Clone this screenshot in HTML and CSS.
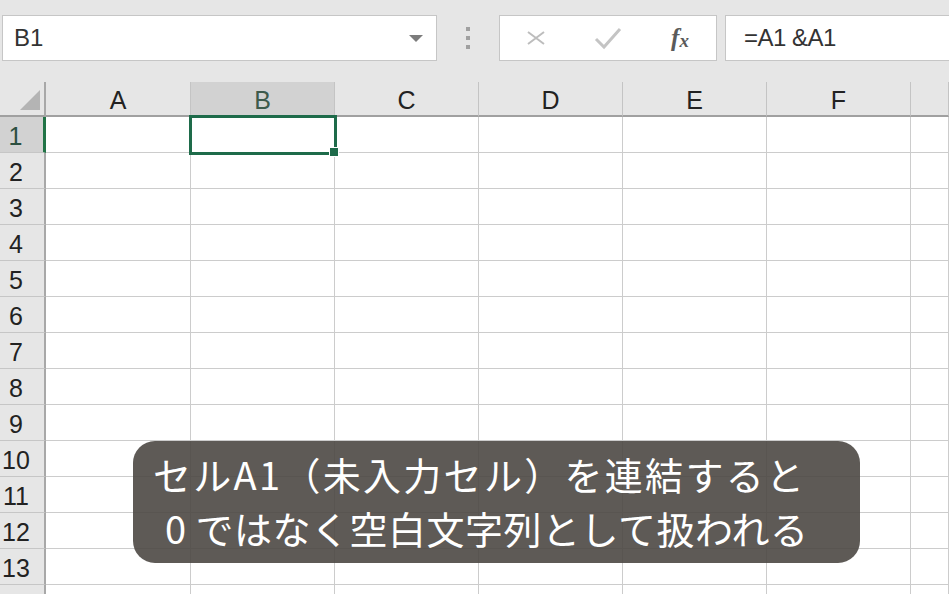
FILE: index.html
```html
<!DOCTYPE html>
<html lang="ja">
<head>
<meta charset="utf-8">
<link rel="stylesheet" href="styles.css">
</head>
<body>
<div class="app">
  <div class="toolbar">
    <div class="namebox"><span>B1</span><span class="arrow"></span></div>
    <div class="sep"><i></i><i></i><i></i></div>
    <div class="fxbtns">
      <span class="btn">
        <svg width="20" height="14" viewBox="0 0 20 14"><path d="M2 1 L18 13 M18 1 L2 13" stroke="#bdbdbd" stroke-width="2" fill="none"/></svg>
      </span>
      <span class="btn">
        <svg width="28" height="24" viewBox="0 0 28 24"><path d="M2 13 L10 21 L26 3" stroke="#c4c4c4" stroke-width="3" fill="none"/></svg>
      </span>
      <span class="btn fx"><i>f</i><i class="x">x</i></span>
    </div>
    <div class="formula">=A1 &amp;A1</div>
  </div>
  <div class="sheet">
    <div class="grid">
      <div class="corner"><span class="tri"></span></div>
      <div class="ch">A</div><div class="ch sel">B</div><div class="ch">C</div><div class="ch">D</div><div class="ch">E</div><div class="ch">F</div><div class="ch last"></div>

      <div class="rh sel">1</div><div class="c"></div><div class="c"></div><div class="c"></div><div class="c"></div><div class="c"></div><div class="c"></div><div class="c"></div>
      <div class="rh">2</div><div class="c"></div><div class="c"></div><div class="c"></div><div class="c"></div><div class="c"></div><div class="c"></div><div class="c"></div>
      <div class="rh">3</div><div class="c"></div><div class="c"></div><div class="c"></div><div class="c"></div><div class="c"></div><div class="c"></div><div class="c"></div>
      <div class="rh">4</div><div class="c"></div><div class="c"></div><div class="c"></div><div class="c"></div><div class="c"></div><div class="c"></div><div class="c"></div>
      <div class="rh">5</div><div class="c"></div><div class="c"></div><div class="c"></div><div class="c"></div><div class="c"></div><div class="c"></div><div class="c"></div>
      <div class="rh">6</div><div class="c"></div><div class="c"></div><div class="c"></div><div class="c"></div><div class="c"></div><div class="c"></div><div class="c"></div>
      <div class="rh">7</div><div class="c"></div><div class="c"></div><div class="c"></div><div class="c"></div><div class="c"></div><div class="c"></div><div class="c"></div>
      <div class="rh">8</div><div class="c"></div><div class="c"></div><div class="c"></div><div class="c"></div><div class="c"></div><div class="c"></div><div class="c"></div>
      <div class="rh">9</div><div class="c"></div><div class="c"></div><div class="c"></div><div class="c"></div><div class="c"></div><div class="c"></div><div class="c"></div>
      <div class="rh">10</div><div class="c"></div><div class="c"></div><div class="c"></div><div class="c"></div><div class="c"></div><div class="c"></div><div class="c"></div>
      <div class="rh">11</div><div class="c"></div><div class="c"></div><div class="c"></div><div class="c"></div><div class="c"></div><div class="c"></div><div class="c"></div>
      <div class="rh">12</div><div class="c"></div><div class="c"></div><div class="c"></div><div class="c"></div><div class="c"></div><div class="c"></div><div class="c"></div>
      <div class="rh">13</div><div class="c"></div><div class="c"></div><div class="c"></div><div class="c"></div><div class="c"></div><div class="c"></div><div class="c"></div>
      <div class="rh"></div><div class="c"></div><div class="c"></div><div class="c"></div><div class="c"></div><div class="c"></div><div class="c"></div><div class="c"></div>
    </div>
    <div class="selection"></div>
    <div class="handle"></div>
    <div class="caption">
      <div class="line l1">セルA1（未入力セル）を連結すると</div>
      <div class="line l2">0 ではなく空白文字列として扱われる</div>
    </div>
  </div>
</div>
</body>
</html>
```
FILE: styles.css
```css
html, body {
  margin: 0;
  padding: 0;
}
body {
  background: #e6e6e6;
  font-family: "Liberation Sans", Arial, sans-serif;
}
.app {
  width: 949px;
  height: 594px;
  overflow: hidden;
}
.toolbar {
  display: flex;
  align-items: flex-start;
  height: 82px;
  box-sizing: border-box;
  padding: 15px 0 0 2px;
  background: #e6e6e6;
}
.namebox {
  width: 435px;
  height: 46px;
  flex: none;
  box-sizing: border-box;
  background: #fff;
  border: 1px solid #c6c6c6;
  display: flex;
  align-items: center;
  justify-content: space-between;
  padding: 0 13px 0 11px;
  font-size: 24px;
  color: #333;
}
.arrow {
  width: 0;
  height: 0;
  border-left: 7px solid transparent;
  border-right: 7px solid transparent;
  border-top: 7px solid #7c7c7c;
}
.sep {
  width: 62px;
  height: 46px;
  flex: none;
  display: flex;
  flex-direction: column;
  align-items: center;
  justify-content: center;
  gap: 5px;
}
.sep i {
  width: 4px;
  height: 4px;
  background: #a0a0a0;
}
.fxbtns {
  width: 218px;
  height: 46px;
  flex: none;
  box-sizing: border-box;
  background: #fff;
  border: 1px solid #c6c6c6;
  display: flex;
  margin-right: 8px;
}
.btn {
  width: 72px;
  display: flex;
  align-items: center;
  justify-content: center;
}
.fx {
  font-family: "Liberation Serif", serif;
  font-style: italic;
  font-weight: bold;
  color: #5a5a5a;
  font-size: 25px;
}
.fx .x {
  font-size: 19px;
  margin-top: 6px;
}
.formula {
  flex: 1;
  height: 46px;
  box-sizing: border-box;
  background: #fff;
  border: 1px solid #c6c6c6;
  margin-right: -10px;
  padding-left: 18px;
  display: flex;
  align-items: center;
  font-size: 24px;
  color: #333;
  letter-spacing: -0.5px;
}
.sheet {
  position: relative;
  background: #fff;
}
.grid {
  display: grid;
  grid-template-columns: 46px 145px 144px 144px 144px 144px 144px 1fr;
  grid-template-rows: 35px repeat(14, 36px);
}
.corner {
  background: #e6e6e6;
  border-right: 2px solid #a8a8a8;
  border-bottom: 2px solid #a0a0a0;
  box-sizing: border-box;
  position: relative;
}
.tri {
  position: absolute;
  left: 20px;
  top: 8px;
  width: 0;
  height: 0;
  border-left: 20px solid transparent;
  border-bottom: 20px solid #b4b4b4;
}
.ch {
  background: #e6e6e6;
  border-right: 1px solid #c4c4c4;
  border-bottom: 2px solid #a0a0a0;
  box-sizing: border-box;
  display: flex;
  align-items: center;
  justify-content: center;
  font-size: 25px;
  color: #222;
  padding-top: 3px;
}
.ch.sel {
  background: #d2d2d2;
  color: #3d5a4c;
  border-bottom: 2px solid #217346;
}
.rh {
  background: #e6e6e6;
  border-right: 2px solid #a8a8a8;
  border-bottom: 1px solid #c6c6c6;
  box-sizing: border-box;
  display: flex;
  align-items: center;
  justify-content: center;
  padding-right: 12px;
  padding-top: 3px;
  font-size: 25px;
  color: #222;
}
.rh.sel {
  background: #d2d2d2;
  border-right: 3px solid #217346;
  color: #2c5040;
}
.c {
  border-right: 1px solid #cccccc;
  border-bottom: 1px solid #cccccc;
  box-sizing: border-box;
}
.selection {
  position: absolute;
  left: 189px;
  top: 33px;
  width: 148px;
  height: 40px;
  box-sizing: border-box;
  border: 3px solid #1e6b4a;
}
.handle {
  position: absolute;
  left: 329px;
  top: 65px;
  width: 10px;
  height: 10px;
  box-sizing: border-box;
  background: #1e6b4a;
  border: 1px solid #fff;
}
.caption {
  position: absolute;
  left: 133px;
  top: 359px;
  width: 727px;
  height: 122px;
  box-sizing: border-box;
  padding: 6px 0 8px 20px;
  border-radius: 22px;
  background: rgba(76, 72, 68, 0.9);
  color: #fff;
  font-family: "Noto Sans CJK JP", sans-serif;
  font-size: 38px;
  line-height: 54px;
  white-space: nowrap;
}
.l1 {
  letter-spacing: 2.3px;
}
.l2 {
  letter-spacing: 0.5px;
  padding-left: 12px;
}
```
